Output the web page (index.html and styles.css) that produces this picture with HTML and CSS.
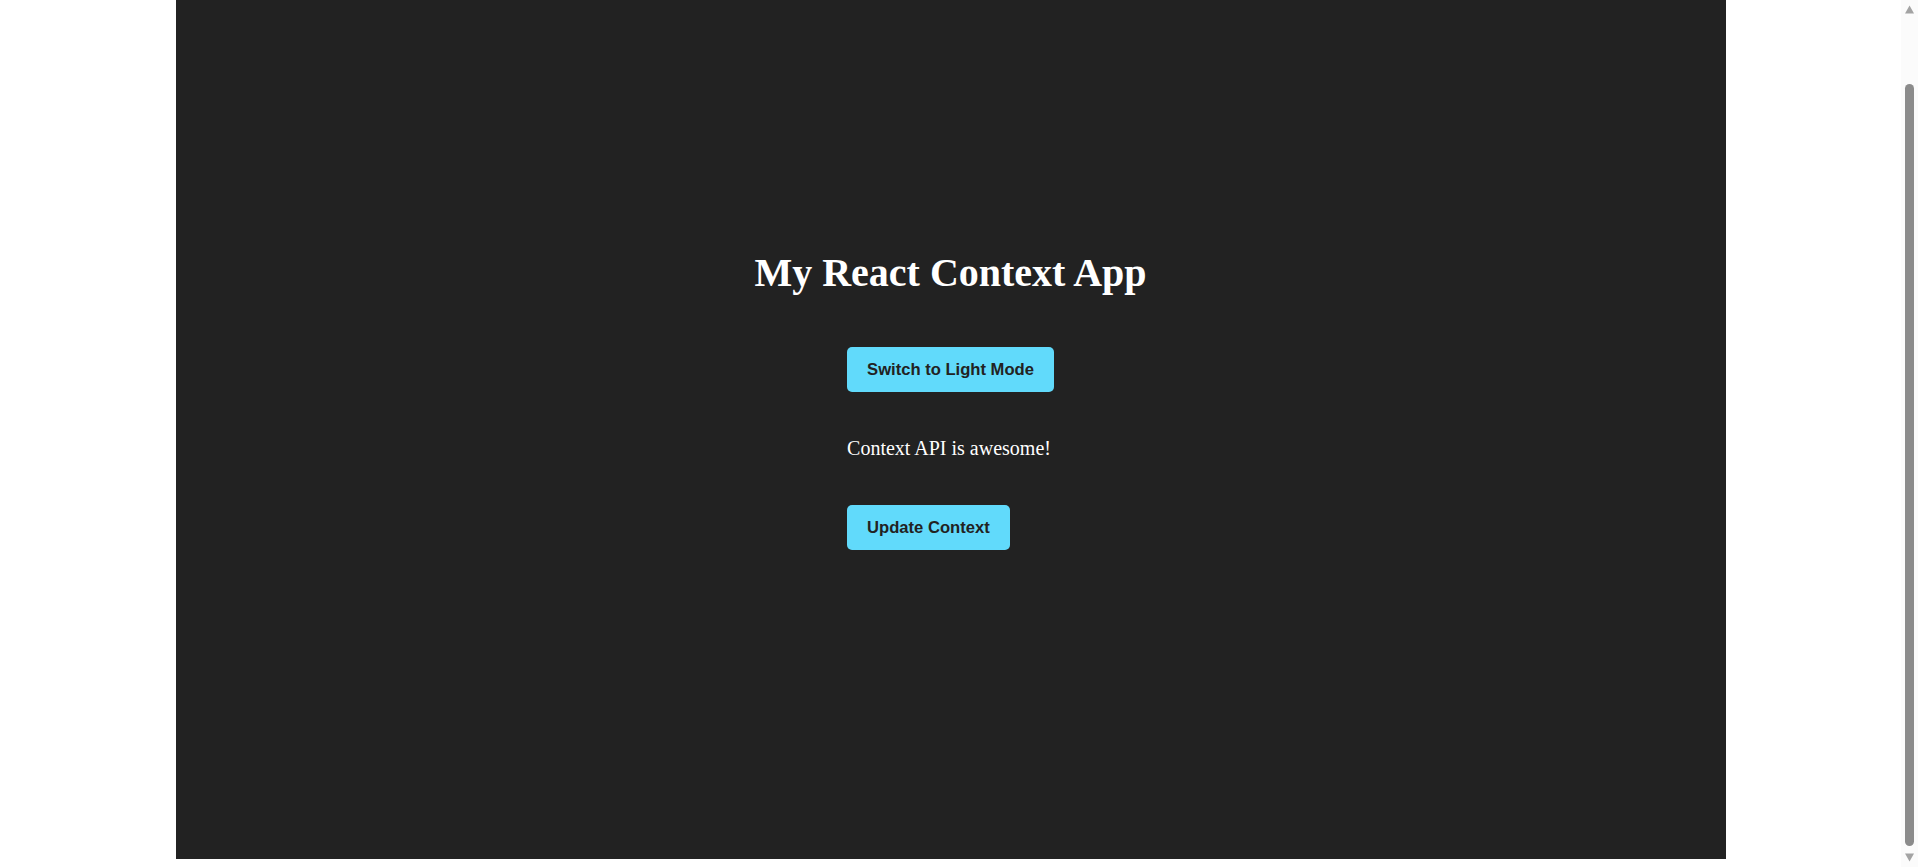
FILE: index.html
```html
<!DOCTYPE html>
<html lang="en">
<head>
<meta charset="utf-8">
<title>My React Context App</title>
<link rel="stylesheet" href="styles.css">
</head>
<body>
<div class="app">
  <h1 class="title">My React Context App</h1>
  <div class="controls">
    <button class="btn">Switch to Light Mode</button>
    <p class="message">Context API is awesome!</p>
    <button class="btn">Update Context</button>
  </div>
</div>
<div class="scrollbar" aria-hidden="true">
  <svg class="arrow arrow-up" width="17" height="17" viewBox="0 0 17 17"><polygon points="4,13.5 13,13.5 8.5,5.5" fill="#a3a3a3"/></svg>
  <div class="thumb"></div>
  <svg class="arrow arrow-down" width="17" height="17" viewBox="0 0 17 17"><polygon points="4,3.5 13,3.5 8.5,11.5" fill="#a3a3a3"/></svg>
</div>
<script src="script.js"></script>
</body>
</html>
```

FILE: styles.css
```css
html, body {
  background: #ffffff;
}
body {
  margin: 8px 25px 8px 8px;
}
.app {
  box-sizing: border-box;
  width: 1550px;
  height: 933px;
  margin: 0 auto;
  padding-top: 324px;
  background: #222222;
  color: #ffffff;
  display: flex;
  flex-direction: column;
  align-items: center;
  font-family: "Liberation Serif", "Times New Roman", serif;
}
.title {
  margin: 0 0 51px;
  font-size: 40px;
  font-weight: bold;
  line-height: 46px;
}
.controls {
  display: flex;
  flex-direction: column;
  align-items: flex-start;
}
.btn {
  font-family: "Liberation Sans", Arial, sans-serif;
  font-size: 16.6px;
  font-weight: bold;
  line-height: 19px;
  padding: 13px 20px;
  border: none;
  border-radius: 5px;
  background: #61dafb;
  color: #222222;
  cursor: pointer;
}
.message {
  margin: 45px 0;
  font-size: 20px;
  line-height: 23px;
}
.scrollbar {
  position: fixed;
  top: 0;
  right: 0;
  width: 17px;
  height: 100vh;
  background: #fbfbfb;
  display: flex;
  flex-direction: column;
  align-items: center;
}
.arrow {
  display: block;
  flex: none;
}
.thumb {
  width: 9px;
  margin-top: 67px;
  margin-bottom: 4px;
  flex: 1;
  border-radius: 5px;
  background: #8b8b8b;
}
```

FILE: script.js
```js
window.scrollTo(0, document.documentElement.scrollHeight);
window.addEventListener('load', function () {
  window.scrollTo(0, document.documentElement.scrollHeight);
});
```
